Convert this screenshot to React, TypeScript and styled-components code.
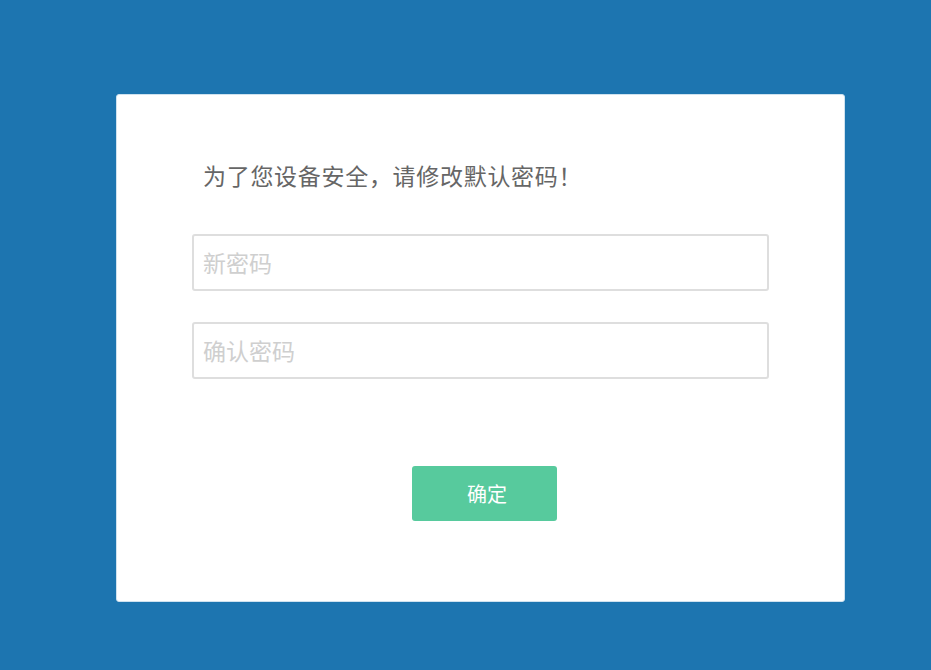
import * as React from 'react';
import styled, { createGlobalStyle } from 'styled-components';

const GlobalStyle = createGlobalStyle`
  html, body {
    margin: 0;
    padding: 0;
    background: #1d75b0;
    font-family: "Liberation Sans", "Noto Sans CJK SC", sans-serif;
  }
`;

const Page = styled.div`
  min-height: 670px;
  padding: 94px 0 0 116px;
  box-sizing: border-box;
`;

const Card = styled.form`
  width: 729px;
  height: 508px;
  box-sizing: border-box;
  background: #ffffff;
  border: 1px solid #cfe2ef;
  border-radius: 3px;
  padding: 67px 76px 0 75px;
  display: flex;
  flex-direction: column;
`;

const Title = styled.p`
  margin: 0 0 42px 0;
  padding-left: 11px;
  font-size: 23px;
  line-height: 30px;
  letter-spacing: 0.7px;
  color: #666666;
`;

const Field = styled.input<{ $gap: number }>`
  width: 577px;
  height: 57px;
  box-sizing: border-box;
  margin: 0 0 ${(p) => p.$gap}px 0;
  padding: 4px 9px 0;
  border: 2px solid #dedede;
  border-radius: 3px;
  font-family: "Liberation Sans", "Noto Sans CJK SC", sans-serif;
  font-size: 23px;
  color: #555555;
  outline: none;

  &::placeholder {
    color: #cfcfcf;
  }
`;

const Actions = styled.div`
  display: flex;
  justify-content: center;
  padding-left: 9px;
`;

const Submit = styled.button`
  width: 145px;
  height: 55px;
  border: none;
  border-radius: 3px;
  background: #57ca9d;
  color: #ffffff;
  font-family: "Liberation Sans", "Noto Sans CJK SC", sans-serif;
  font-size: 20px;
  padding: 0 0 0 5px;
  cursor: pointer;
`;

export default function App() {
  return (
    <Page>
      <GlobalStyle />
      <Card onSubmit={(e) => e.preventDefault()}>
        <Title>为了您设备安全，请修改默认密码！</Title>
        <Field $gap={31} type="password" placeholder="新密码" />
        <Field $gap={87} type="password" placeholder="确认密码" />
        <Actions>
          <Submit type="submit">确定</Submit>
        </Actions>
      </Card>
    </Page>
  );
}
